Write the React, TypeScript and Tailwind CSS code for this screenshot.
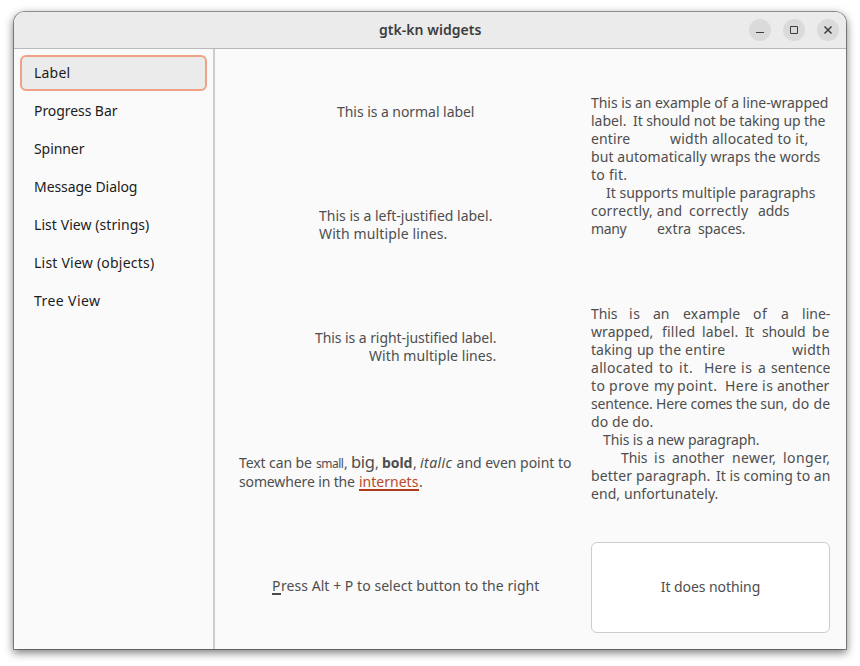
import { useLayoutEffect, useRef, useState } from "react";
import type { ReactNode } from "react";

// Stretches or tightens its text by letter spacing so that it fills `width`.
function Fit({ width, children, className = "" }: { width: number; children: ReactNode; className?: string }) {
  const ref = useRef<HTMLSpanElement>(null);
  const [spacing, setSpacing] = useState(0);
  useLayoutEffect(() => {
    const el = ref.current;
    if (!el) return;
    el.style.letterSpacing = "0px";
    const natural = el.getBoundingClientRect().width;
    const count = (el.textContent || "x").length;
    const next = (width - 0.6 - natural) / count;
    el.style.letterSpacing = `${next}px`;
    setSpacing(next);
  }, [width]);
  return (
    <span className={`block shrink-0 whitespace-pre ${className}`} style={{ width }}>
      <span ref={ref} className="inline-block" style={{ letterSpacing: spacing }}>
        {children}
      </span>
    </span>
  );
}

type Run = [start: number, end: number, text: string];

function Line({ runs }: { runs: Run[] }) {
  return (
    <div className="flex h-[18px]">
      {runs.map(([start, end, text], i) => (
        <div key={i} style={{ marginLeft: start - (i ? runs[i - 1][1] : 0) }}>
          <Fit width={end - start}>{text}</Fit>
        </div>
      ))}
    </div>
  );
}

const wrapped: Run[][] = [
  [[0, 238, "This is an example of a line-wrapped"]],
  [[0, 36, "label."], [42, 235, "It should not be taking up the"]],
  [[0, 40, "entire"], [79, 218, "width allocated to it,"]],
  [[0, 230, "but automatically wraps the words"]],
  [[0, 37, "to fit."]],
  [[15, 225, "It supports multiple paragraphs"]],
  [[0, 92, "correctly, and"], [98, 158, "correctly"], [167, 199, "adds"]],
  [[0, 36, "many"], [66, 101, "extra"], [107, 155, "spaces."]],
];

const filled: Run[][] = [
  [[0, 27, "This"], [38, 50, "is"], [62, 79, "an"], [92, 150, "example"], [162, 177, "of"], [190, 198, "a"], [211, 240, "line-"]],
  [[0, 63, "wrapped,"], [71, 105, "filled"], [111, 148, "label."], [154, 163, "It"], [171, 215, "should"], [221, 240, "be"]],
  [[0, 42, "taking"], [46, 63, "up"], [68, 91, "the"], [94, 135, "entire"], [201, 240, "width"]],
  [[0, 63, "allocated"], [68, 83, "to"], [88, 103, "it."], [113, 146, "Here"], [150, 162, "is"], [167, 175, "a"], [180, 240, "sentence"]],
  [[0, 15, "to"], [18, 59, "prove"], [63, 83, "my"], [86, 127, "point."], [134, 168, "Here"], [171, 183, "is"], [186, 239, "another"]],
  [[0, 197, "sentence. Here comes the sun,"], [201, 240, "do de"]],
  [[0, 63, "do de do."]],
  [[12, 169, "This is a new paragraph."]],
  [[30, 57, "This"], [63, 75, "is"], [81, 134, "another"], [141, 186, "newer,"], [192, 240, "longer,"]],
  [[0, 120, "better paragraph."], [125, 240, "It is coming to an"]],
  [[0, 128, "end, unfortunately."]],
];

const items: [string, number][] = [
  ["Label", 37],
  ["Progress Bar", 84],
  ["Spinner", 51],
  ["Message Dialog", 104],
  ["List View (strings)", 116],
  ["List View (objects)", 121],
  ["Tree View", 67],
];

function Titlebar() {
  return (
    <header className="flex h-[37px] shrink-0 items-center rounded-t-[11px] border-b border-[#b9b9b9] bg-[#ebebeb]">
      <div className="w-[365px]" />
      <Fit width={103} className="font-semibold text-[#3d3d3d]">gtk-kn widgets</Fit>
      <div className="ml-auto flex gap-3 pr-[7px] text-[#3d3d3d]">
        {[
          <path key="min" d="M7 13.5h8" />,
          <path key="max" d="M7.5 7.5h7v7h-7z" />,
          <path key="close" d="m7.5 7.5 7 7m0-7-7 7" strokeWidth="1.5" />,
        ].map((icon, i) => (
          <button key={i} className="size-[22px] rounded-full bg-[#dadada]">
            <svg viewBox="0 0 22 22" className="size-[22px]" fill="none" stroke="currentColor">{icon}</svg>
          </button>
        ))}
      </div>
    </header>
  );
}

export default function App() {
  return (
    <div className="h-[666px] w-[860px] overflow-hidden bg-white px-[14px] pt-3 font-['Noto_Sans',sans-serif] text-[14px] leading-[18px] text-[#4e4e4e]">
      <div className="flex h-[637px] w-[832px] flex-col rounded-t-[11px] bg-[#fafafa] shadow-[0_0_0_1px_rgba(0,0,0,0.36),0_3px_9px_1px_rgba(0,0,0,0.5)]">
        <Titlebar />
        <div className="flex min-h-0 flex-1">
          <nav className="flex w-[201px] shrink-0 flex-col gap-0.5 border-r-2 border-[#cdcdcd] px-1.5 pt-1.5 text-[#1c1c1c]">
            {items.map(([name, width], i) => (
              <div
                key={name}
                className={`flex h-9 w-[187px] shrink-0 items-center rounded-md border-2 px-3 ${i === 0 ? "border-[#f0a086] bg-[#ebebeb]" : "border-transparent"}`}
              >
                <Fit width={width}>{name}</Fit>
              </div>
            ))}
          </nav>
          <main className="flex flex-1 gap-[19px] pl-6">
            <div className="flex w-[333px] shrink-0 flex-col pt-[54px]">
              <Fit width={138} className="ml-[98px]">This is a normal label</Fit>
              <div className="mt-[86px] ml-20">
                <Fit width={174}>This is a left-justified label.</Fit>
                <Fit width={129}>With multiple lines.</Fit>
              </div>
              <div className="mt-[86px] ml-[76px] flex w-[182px] flex-col items-end">
                <Fit width={182}>This is a right-justified label.</Fit>
                <Fit width={128}>With multiple lines.</Fit>
              </div>
              <div className="mt-[88px]">
                <div className="flex h-[19px] items-baseline">
                  <Fit width={77}>Text can be </Fit>
                  <Fit width={28} className="text-[12px]">small</Fit>
                  <Fit width={7}>, </Fit>
                  <Fit width={24} className="text-[16.5px]">big</Fit>
                  <Fit width={7}>, </Fit>
                  <Fit width={31} className="font-bold">bold</Fit>
                  <Fit width={7}>, </Fit>
                  <Fit width={33} className="italic">italic</Fit>
                  <Fit width={119}> and even point to</Fit>
                </div>
                <div className="flex h-5 pt-px">
                  <Fit width={120}>somewhere in the </Fit>
                  <a className="flex h-[18px] border-b-2 border-[#b03b18] text-[#b84a29]">
                    <Fit width={60}>internets</Fit>
                  </a>
                  <span>.</span>
                </div>
              </div>
              <div className="mt-[85px] ml-[33px] flex">
                <span className="h-[18px] border-b-2 border-[#4a4a4a]">
                  <Fit width={9}>P</Fit>
                </span>
                <Fit width={259}>ress Alt + P to select button to the right</Fit>
              </div>
            </div>
            <div className="flex w-[239px] shrink-0 flex-col pt-[45px]">
              <div>{wrapped.map((runs, i) => <Line key={i} runs={runs} />)}</div>
              <div className="mt-[67px]">{filled.map((runs, i) => <Line key={i} runs={runs} />)}</div>
              <button className="mt-[39px] flex h-[91px] w-[239px] items-center justify-center rounded-md border border-[#cdcdcd] bg-white pb-0.5">
                <Fit width={100}>It does nothing</Fit>
              </button>
            </div>
          </main>
        </div>
      </div>
    </div>
  );
}
